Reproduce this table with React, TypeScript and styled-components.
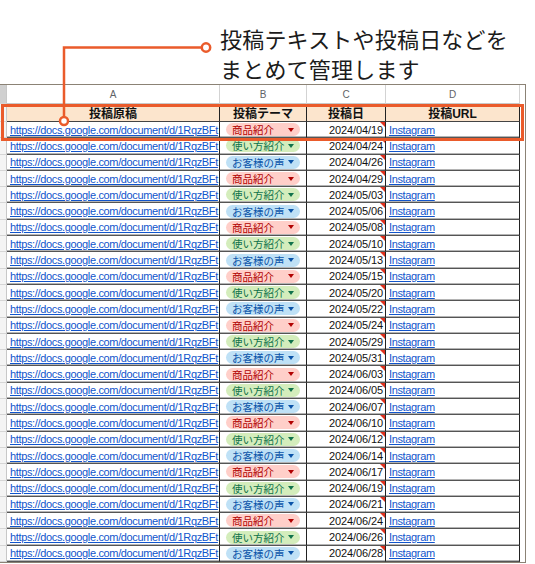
import React from "react";
import styled, { createGlobalStyle } from "styled-components";

const GlobalStyle = createGlobalStyle`
  html, body { margin: 0; padding: 0; background: #ffffff; }
  body { font-family: "Liberation Sans", "Noto Sans CJK JP", sans-serif; }
`;

const COLS = "7px 213px 87px 79px 134px 5px";
const ORANGE = "#ea5b2b";

type Theme = "red" | "green" | "blue";

const THEMES: Record<Theme, { label: string; bg: string; fg: string }> = {
  red: { label: "商品紹介", bg: "#ffcfc9", fg: "#b10202" },
  green: { label: "使い方紹介", bg: "#d4edbc", fg: "#11734b" },
  blue: { label: "お客様の声", bg: "#bfe1f6", fg: "#0a53a8" },
};

const DATES = [
  "2024/04/19", "2024/04/24", "2024/04/26", "2024/04/29", "2024/05/03",
  "2024/05/06", "2024/05/08", "2024/05/10", "2024/05/13", "2024/05/15",
  "2024/05/20", "2024/05/22", "2024/05/24", "2024/05/29", "2024/05/31",
  "2024/06/03", "2024/06/05", "2024/06/07", "2024/06/10", "2024/06/12",
  "2024/06/14", "2024/06/17", "2024/06/19", "2024/06/21", "2024/06/24",
  "2024/06/26", "2024/06/28",
];
const ORDER: Theme[] = ["red", "green", "blue"];

const Page = styled.div`
  position: relative;
  width: 535px;
  height: 564px;
  overflow: hidden;
`;

const Caption = styled.div`
  padding: 23px 0 1px 220px;
  height: 84px;
  box-sizing: border-box;
  font-family: "Noto Sans CJK JP", sans-serif;
  font-size: 22px;
  line-height: 30px;
  color: #1b1b1b;
  letter-spacing: 0.2px;
`;

const Sheet = styled.div`
  width: 526px;
  box-sizing: border-box;
  border-top: 1px solid #8b8275;
  border-right: 1px solid #8b8275;
  border-bottom: 1px solid #8b8275;
  background: #ffffff;
`;

const Row = styled.div<{ $h: number }>`
  display: grid;
  grid-template-columns: ${COLS};
  height: ${(p) => p.$h}px;
`;

const Gutter = styled.div<{ $corner?: boolean }>`
  background: ${(p) => (p.$corner ? "#d0d0d0" : "#f4f4f4")};
  border-right: 1px solid #c8c8c8;
  border-bottom: 1px solid #d6d6d6;
  box-sizing: border-box;
`;

const Blank = styled.div``;

const LetterCell = styled.div`
  display: flex;
  align-items: center;
  justify-content: center;
  font-size: 10px;
  color: #5f6368;
  border-right: 1px solid #d3d3d3;
  border-bottom: 1px solid #c8c8c8;
  box-sizing: border-box;
`;

const HeadCell = styled.div`
  display: flex;
  align-items: center;
  justify-content: center;
  background: #fce5cd;
  font-size: 12px;
  font-weight: bold;
  color: #111;
  border-right: 1px solid #222;
  border-bottom: 1px solid #444;
  box-sizing: border-box;
`;

const Cell = styled.div<{ $align?: "left" | "right" }>`
  position: relative;
  display: flex;
  align-items: center;
  justify-content: ${(p) => (p.$align === "right" ? "flex-end" : "flex-start")};
  padding: 0 2px 0 3px;
  overflow: hidden;
  white-space: nowrap;
  font-size: 11px;
  letter-spacing: -0.1px;
  color: #111;
  border-right: 1px solid #222;
  border-bottom: 1px solid #555;
  box-shadow: inset 0 -1px 0 #b4b4b4;
  box-sizing: border-box;
`;

const Link = styled.span`
  color: #1155cc;
  text-decoration: underline;
  font-size: 11px;
  letter-spacing: -0.35px;
`;

const Chip = styled.span<{ $bg: string; $fg: string }>`
  display: inline-flex;
  align-items: center;
  justify-content: space-between;
  width: 74px;
  height: 13px;
  margin-left: 3px;
  padding: 0 6px 0 6px;
  box-sizing: border-box;
  border-radius: 7px;
  background: ${(p) => p.$bg};
  color: ${(p) => p.$fg};
  font-family: "Noto Sans CJK JP", sans-serif;
  font-size: 10.5px;
  line-height: 13px;
  letter-spacing: 0;
`;

const Caret = styled.span<{ $fg: string }>`
  flex: none;
  width: 0;
  height: 0;
  border-left: 3.5px solid transparent;
  border-right: 3.5px solid transparent;
  border-top: 4px solid ${(p) => p.$fg};
`;

const CommentMark = styled.span`
  position: absolute;
  top: 0;
  right: 0;
  width: 0;
  height: 0;
  border-left: 5px solid transparent;
  border-top: 5px solid #e0321f;
`;

const Overlay = styled.svg`
  position: absolute;
  left: 0;
  top: 0;
  pointer-events: none;
`;

const Highlight = styled.div`
  position: absolute;
  left: 1px;
  top: 104px;
  width: 523px;
  height: 37px;
  box-sizing: border-box;
  border: 3px solid ${ORANGE};
  pointer-events: none;
`;

export default function App() {
  return (
    <Page>
      <GlobalStyle />
      <Caption>
        投稿テキストや投稿日などを
        <br />
        まとめて管理します
      </Caption>
      <Sheet>
        <Row $h={19}>
          <Gutter $corner />
          <LetterCell>A</LetterCell>
          <LetterCell>B</LetterCell>
          <LetterCell>C</LetterCell>
          <LetterCell>D</LetterCell>
          <Blank />
        </Row>
        <Row $h={18}>
          <Gutter />
          <HeadCell>投稿原稿</HeadCell>
          <HeadCell>投稿テーマ</HeadCell>
          <HeadCell>投稿日</HeadCell>
          <HeadCell>投稿URL</HeadCell>
          <Blank />
        </Row>
        {DATES.map((d, i) => {
          const t = THEMES[ORDER[i % 3]];
          return (
            <Row $h={16.3} key={d}>
              <Gutter />
              <Cell>
                <Link>https://docs.google.com/document/d/1RqzBFt</Link>
              </Cell>
              <Cell>
                <Chip $bg={t.bg} $fg={t.fg}>
                  {t.label}
                  <Caret $fg={t.fg} />
                </Chip>
              </Cell>
              <Cell $align="right">
                {d}
                <CommentMark />
              </Cell>
              <Cell>
                <Link>Instagram</Link>
              </Cell>
              <Blank />
            </Row>
          );
        })}
      </Sheet>
      <Highlight />
      <Overlay width={535} height={564} viewBox="0 0 535 564">
        <path d="M64 121 V47.5 H202" fill="none" stroke={ORANGE} strokeWidth={2.5} />
        <circle cx={64} cy={121} r={4} fill="#fff" stroke={ORANGE} strokeWidth={2.5} />
        <circle cx={206} cy={47.5} r={4.2} fill="#fff" stroke={ORANGE} strokeWidth={2.5} />
      </Overlay>
    </Page>
  );
}
